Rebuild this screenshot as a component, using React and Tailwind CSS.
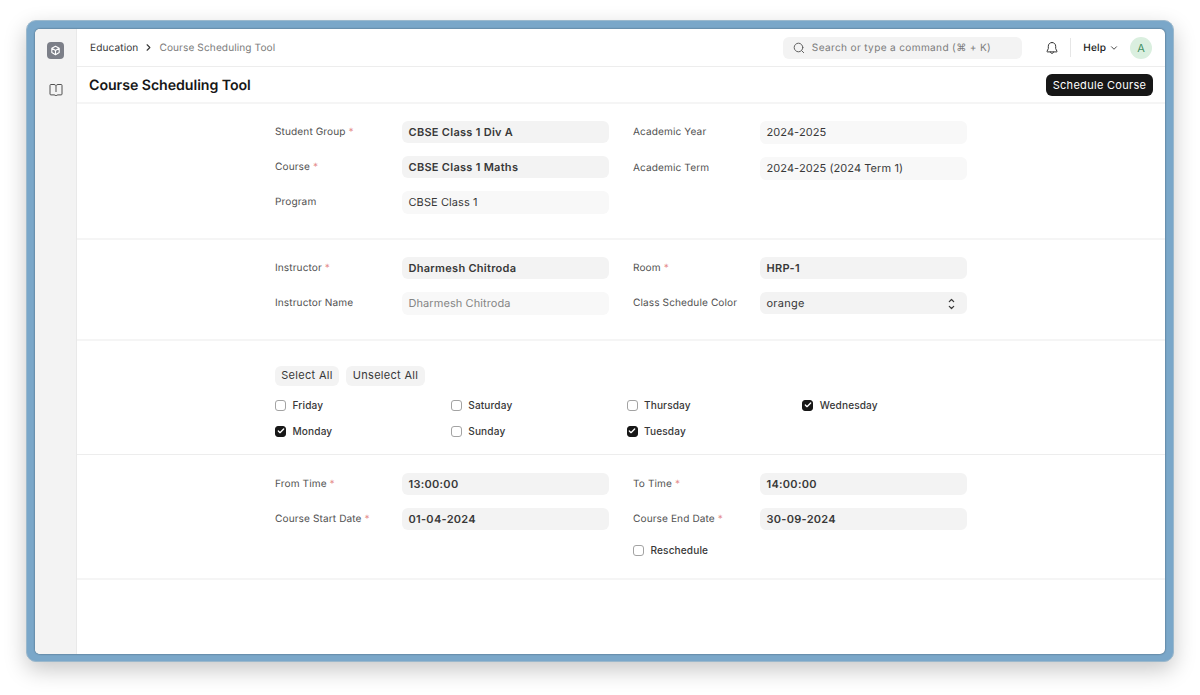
import React, { useState } from 'react';
import { Check, ChevronDown, ChevronRight } from 'lucide-react';

const DAYS = ['Friday', 'Saturday', 'Thursday', 'Wednesday', 'Monday', 'Sunday', 'Tuesday'];

const Label = ({ text, required }) => (
  <span className="h-[22px] w-[127px] shrink-0 text-[10.1px] leading-[22px] tracking-[0.1px] text-[#525252]">
    {text}
    {required && <span className="text-[#e58c8c]"> *</span>}
  </span>
);

const Field = ({ label, value, required, readOnly, muted }) => (
  <div className="flex">
    <Label text={label} required={required} />
    <div
      className={
        'flex w-[207px] items-center rounded-[6px] px-[6.5px] text-[11px] ' +
        (readOnly ? 'h-[23px] bg-[#f8f8f8] tracking-[0.08px] ' : 'h-[22px] bg-[#f3f3f3] pt-px ') +
        (required ? 'font-semibold tracking-[0.28px] ' : '') +
        (muted ? 'text-[#858585]' : 'text-[#383838]')
      }
    >
      {value}
    </div>
  </div>
);

const SelectField = ({ label, value }) => (
  <div className="flex">
    <Label text={label} />
    <div className="flex h-[22px] w-[207px] items-center justify-between rounded-[6px] bg-[#f3f3f3] pl-[6.5px] pr-[12px] pt-px text-[11px] tracking-[0.25px] text-[#383838]">
      {value}
      <svg width="7" height="12" viewBox="0 0 7 12" fill="none" stroke="#383838" strokeWidth="1.2" strokeLinecap="round" strokeLinejoin="round">
        <path d="M1.3 3.7 3.5 1.5l2.2 2.2M1.3 8.3l2.2 2.2 2.2-2.2" />
      </svg>
    </div>
  </div>
);

const CheckItem = ({ label, checked, onToggle }) => (
  <button type="button" onClick={onToggle} className="flex h-[18px] items-center gap-[6.5px] text-left text-[10.1px] font-medium tracking-[0.13px] text-[#383838]">
    <span
      className={
        'flex size-[11px] items-center justify-center rounded-[3px] border ' +
        (checked ? 'border-[#171717] bg-[#171717]' : 'border-[#a3a3a3] bg-white')
      }
    >
      {checked && <Check className="size-[8px] shrink-0 text-white" strokeWidth={4} />}
    </span>
    <span className="pt-px">{label}</span>
  </button>
);

const Section = ({ className, children }) => (
  <section className={'pl-[198px] ' + className}>{children}</section>
);

const Sidebar = () => (
  <aside className="flex w-[42px] shrink-0 flex-col items-center gap-[24px] border-r border-[#e9e9e9] bg-[#f3f3f3] pt-[13px]">
    <svg width="17" height="17" viewBox="0 0 17 17" fill="none">
      <rect width="17" height="17" rx="4" fill="#7c7f88" />
      <path d="M8.5 4.2 12.2 6.2v4.3l-3.7 2.2-3.7-2.2V6.2zM4.9 6.3l3.6 2.1 3.6-2.1M8.5 8.4v4" stroke="#fff" strokeWidth="1.1" strokeLinejoin="round" />
    </svg>
    <svg width="14" height="14" viewBox="0 0 14 14" fill="none" stroke="#505050" strokeWidth="1" strokeLinejoin="round">
      <path d="M7 2.7C6.6 1.9 6 1.5 5 1.5H1.9Q1 1.5 1 2.4v8.6q0 .9.9.9H5c1 0 1.600.3 2 1.100.4-.8 1-1.100 2-1.100h3.100q.9 0 .9-.9V2.400q0-.9-.9-.9H9C8 1.500 7.400 1.900 7 2.700V9" />
    </svg>
  </aside>
);

const Navbar = () => (
  <header className="flex h-[38px] items-center border-b border-[#ededed] px-[13px] text-[10.1px] tracking-[0.1px]">
    <span className="pt-[2px] text-[#383838]">Education</span>
    <ChevronRight className="mx-[5px] size-[11px] text-[#383838]" strokeWidth={2.5} />
    <span className="pt-[2px] text-[#7c7c7c]">Course Scheduling Tool</span>
    <div className="ml-auto flex h-[22px] w-[239px] items-center rounded-[6px] bg-[#f3f3f3] pl-[10px] text-[#7c7c7c]">
      <svg width="12" height="12" viewBox="0 0 12 12" fill="none" stroke="#606060" strokeLinecap="round">
        <circle cx="5.5" cy="5.5" r="4.3" />
        <path d="m8.7 8.7 2 2" />
      </svg>
      <span className="ml-[6.5px] pt-[2px] tracking-[0.34px]">Search or type a command (⌘ + K)</span>
    </div>
    <svg className="ml-[24px]" width="12" height="14" viewBox="0 0 12 14" fill="none" stroke="#383838" strokeLinejoin="round" strokeLinecap="round">
      <path d="M6 1.5C3.7 1.5 2.3 3.2 2.3 5.3v2.3L1 10.3q-.2.6.4.6h9.2q.6 0 .4-.6L9.7 7.6V5.3C9.7 3.2 8.3 1.5 6 1.5zM4.4 11c0 2 3.2 2 3.2 0" />
    </svg>
    <span className="ml-[12px] h-[19px] w-px bg-[#e6e6e6]" />
    <span className="ml-[12px] pt-[2px] font-medium text-[#171717]">Help</span>
    <ChevronDown className="ml-[3px] size-[10px] text-[#383838]" strokeWidth={2.2} />
    <span className="ml-[11px] flex size-[22px] items-center justify-center rounded-full bg-[#daefdf] pt-[2px] text-[11px] text-[#3f8f5f]">A</span>
  </header>
);

export default function App() {
  const [selected, setSelected] = useState(['Wednesday', 'Monday', 'Tuesday']);
  const [reschedule, setReschedule] = useState(false);

  const toggleDay = (day) => {
    setSelected((prev) => (prev.includes(day) ? prev.filter((d) => d !== day) : [...prev, day]));
  };

  return (
    <div className="h-[695px] w-[1200px] overflow-hidden bg-white px-[26px] pt-[20px] font-['Inter',sans-serif] [text-rendering:geometricPrecision]">
      <div className="h-[642px] w-[1148px] rounded-[10px] border border-[#9bb8cc] bg-[#7aa7c9] px-[8px] pt-[8px] shadow-[0_8px_22px_rgba(0,0,0,0.22)]">
        <div className="flex h-[625px] w-[1130px] overflow-hidden rounded-[5px] bg-white shadow-[0_0_2px_rgba(0,0,0,0.5)]">
          <Sidebar />
          <main className="min-w-0 flex-1">
            <Navbar />
            <div className="flex h-[37px] items-center justify-between border-b-2 border-[#f5f5f5] px-[12px]">
              <h1 className="pt-[2px] text-[14.2px] font-semibold tracking-[-0.06px] text-[#171717]">Course Scheduling Tool</h1>
              <button type="button" className="h-[22px] w-[107px] rounded-[6px] bg-[#171717] pt-px text-[11px] tracking-[0.3px] text-white">
                Schedule Course
              </button>
            </div>

            <Section className="flex h-[136px] gap-[24px] border-b-2 border-[#f5f5f5] pt-[17px]">
              <div className="flex flex-col gap-[13px]">
                <Field label="Student Group" value="CBSE Class 1 Div A" required />
                <Field label="Course" value="CBSE Class 1 Maths" required />
                <Field label="Program" value="CBSE Class 1" readOnly />
              </div>
              <div className="flex flex-col gap-[13px]">
                <Field label="Academic Year" value="2024-2025" readOnly />
                <Field label="Academic Term" value="2024-2025 (2024 Term 1)" readOnly />
              </div>
            </Section>

            <Section className="flex h-[101px] gap-[24px] border-b-2 border-[#f5f5f5] pt-[17px]">
              <div className="flex flex-col gap-[13px]">
                <Field label="Instructor" value="Dharmesh Chitroda" required />
                <Field label="Instructor Name" value="Dharmesh Chitroda" readOnly muted />
              </div>
              <div className="flex flex-col gap-[13px]">
                <Field label="Room" value="HRP-1" required />
                <SelectField label="Class Schedule Color" value="orange" />
              </div>
            </Section>

            <Section className="h-[114px] border-b border-[#ededed] pt-[25px]">
              <div className="flex gap-[7px] text-[11px] tracking-[0.3px] text-[#383838]">
                <button type="button" onClick={() => setSelected(DAYS)} className="h-[20px] w-[64px] rounded-[6px] bg-[#f3f3f3] pb-px">
                  Select All
                </button>
                <button type="button" onClick={() => setSelected([])} className="h-[20px] w-[79px] rounded-[6px] bg-[#f3f3f3] pb-px">
                  Unselect All
                </button>
              </div>
              <div className="mt-[10px] grid w-[703px] grid-cols-4 gap-y-[8px]">
                {DAYS.map((day) => (
                  <CheckItem key={day} label={day} checked={selected.includes(day)} onToggle={() => toggleDay(day)} />
                ))}
              </div>
            </Section>

            <Section className="flex h-[125px] gap-[24px] border-b-2 border-[#f5f5f5] pt-[18px]">
              <div className="flex flex-col gap-[13px]">
                <Field label="From Time" value="13:00:00" required />
                <Field label="Course Start Date" value="01-04-2024" required />
              </div>
              <div className="flex flex-col">
                <div className="flex flex-col gap-[13px]">
                  <Field label="To Time" value="14:00:00" required />
                  <Field label="Course End Date" value="30-09-2024" required />
                </div>
                <div className="mt-[11px]">
                  <CheckItem label="Reschedule" checked={reschedule} onToggle={() => setReschedule(!reschedule)} />
                </div>
              </div>
            </Section>
          </main>
        </div>
      </div>
    </div>
  );
}
